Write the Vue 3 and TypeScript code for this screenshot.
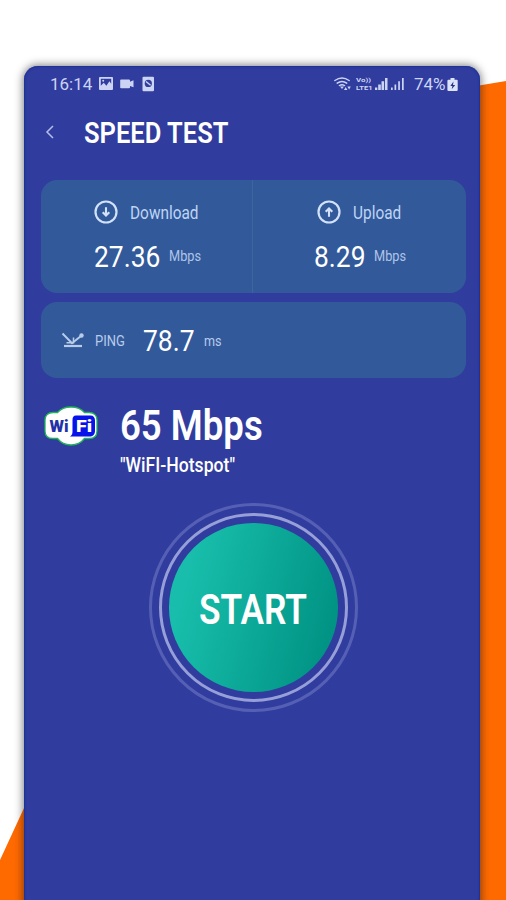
<script setup lang="ts">
interface Speed {
  id: string
  label: string
  value: string
  arrow: string
}

const speeds: Speed[] = [
  { id: 'download', label: 'Download', value: '27.36', arrow: 'M12 7.3v8M8.7 12.2l3.300 3.300 3.300-3.300' },
  { id: 'upload', label: 'Upload', value: '8.29', arrow: 'M12 16.7v-8M8.7 11.800L12 8.500l3.300 3.300' },
]
</script>

<template>
  <div class="stage">
    <svg class="backdrop" viewBox="0 0 506 900" aria-hidden="true">
      <path d="M470 87L506 81V900H470zM0 860L24 808V900H0z" fill="#ff6a00" />
    </svg>
    <main class="phone">
      <div class="status">
        <span class="clock t">16:14</span>
        <svg class="notes" viewBox="0 0 56 16" fill="#ccd4f4">
          <path fill-rule="evenodd" d="M1 1h12a1 1 0 0 1 1 1v11a1 1 0 0 1-1 1H1a1 1 0 0 1-1-1V2a1 1 0 0 1 1-1zm.8 1.8v7l3-3 2.6 3 3-4.5 1.8 2.5v-5z" />
          <circle cx="4.2" cy="4.8" r="1" />
          <path d="M22 3.500h8a1 1 0 0 1 1 1v1.300l3.500-1.500v7L31 10v1.300a1 1 0 0 1-1 1h-8a.8.8 0 0 1-.8-.8V4.300a.8.8 0 0 1 .8-.8z" />
          <path fill-rule="evenodd" d="M44.500 .7h9.500a1 1 0 0 1 1 1v12.500a1 1 0 0 1-1 1h-9.500a1 1 0 0 1-1-1V1.700a1 1 0 0 1 1-1zM49.300 3.800a3.600 3.600 0 1 0 0 7.200 3.600 3.600 0 0 0 0-7.200z" />
          <path d="M47 5.500l4.600 3.800" stroke="#ccd4f4" stroke-width="1.400" />
        </svg>
        <svg class="signals" viewBox="0 0 72 16" fill="#ccd4f4">
          <g fill="none" stroke="#ccd4f4" stroke-width="1.500" stroke-linecap="round">
            <path d="M.9 4.500Q8-.4 15.100 4.500M3.200 7.100Q8 3.800 12.700 7.100M5.500 9.500Q8 7.800 10.500 9.500" />
          </g>
          <path d="M6 10.500h4L8 13zM10 14l1.700-3 1.700 3zM13.400 10.500h3.400l-1.700 3z" />
          <text x="22" y="6.400" textLength="15" lengthAdjust="spacingAndGlyphs">Vo))</text>
          <text x="22" y="13.900" textLength="16.500" lengthAdjust="spacingAndGlyphs">LTE1</text>
          <path d="M41 11.500h2.300V14H41zM44.200 8.500h2.600V14h-2.600zM47.500 5.300h2.600V14h-2.600zM51 2h2.500v12H51z" />
          <path d="M57 11.500h1.700V14H57zM60.500 8.500h1.700V14h-1.700zM64.200 5.300h1.700V14h-1.700zM68 2h1.700v12H68z" />
        </svg>
        <span class="percent t">74%</span>
        <svg class="battery" viewBox="0 0 12 15">
          <path d="M3.500 1h4v1.700h2.200a1 1 0 0 1 1 1V13a1 1 0 0 1-1 1H1.400a1 1 0 0 1-1-1V3.700a1 1 0 0 1 1-1h2.100z" fill="#dce2fa" />
          <path d="M6.500 4.500L3.300 9h2.100l-.7 3.300L8.200 8H6z" fill="#26338b" />
        </svg>
      </div>

      <header class="bar">
        <svg class="back" viewBox="0 0 10 14"><path d="M8 1L2 7l6 6" fill="none" stroke="#b4bfeb" stroke-width="1.500" /></svg>
        <h1 class="t">SPEED TEST</h1>
      </header>

      <section class="card speeds">
        <div v-for="s in speeds" :key="s.id" class="speed" :class="s.id">
          <div class="caption">
            <svg class="dir" viewBox="0 0 24 24" fill="none" stroke="#d3e2fa">
              <circle cx="12" cy="12" r="10.500" stroke-width="2.200" />
              <path :d="s.arrow" stroke-width="2.100" />
            </svg>
            <span class="label t">{{ s.label }}</span>
          </div>
          <div class="reading">
            <span class="value t">{{ s.value }}</span>
            <span class="unit t">Mbps</span>
          </div>
        </div>
      </section>

      <section class="card ping">
        <svg class="bounce" viewBox="0 0 24 16" fill="none" stroke="#b9cbea">
          <path d="M1.500 1.500L11 11.200L20 4" stroke-width="2" />
          <path d="M5.500 10.800h7V5.500" stroke-width="1.500" />
          <path d="M3 14h18" stroke-width="2.200" />
          <circle cx="20.500" cy="3.500" r="2.200" fill="#b9cbea" stroke="none" />
        </svg>
        <span class="ping-label t">PING</span>
        <span class="ping-value t">78.7</span>
        <span class="ping-unit t">ms</span>
      </section>

      <section class="network">
        <svg class="wifi" viewBox="0 0 54 40">
          <path d="M13.500 6.500C17 2.500 21.500 1 27 1s10 1.500 13.500 5.500H45c5 0 8 3 8 7.500v11c0 5-3 7.500-8 7.500h-4.500C37 37 32.500 39 27 39s-10-2-13.500-6.500H9c-5 0-8-2.500-8-7.500V14c0-4.500 3-7.500 8-7.500z" fill="#fff" stroke="#20b35c" stroke-width="1.300" />
          <path d="M32 9.500h14.500c3 0 4.500 2 4.500 5v10c0 4-2 6-6 6H26c2.500-1.500 2.500-3.500 2.500-6V14c0-3 1-4.500 3.500-4.500z" fill="#0713e8" />
          <text class="wi" x="5.500" y="25.700" textLength="19" lengthAdjust="spacingAndGlyphs">Wi</text>
          <text class="fi" x="32" y="25.700" textLength="16" lengthAdjust="spacingAndGlyphs">Fi</text>
        </svg>
        <div class="link">
          <strong class="t">65 Mbps</strong>
          <span class="ssid t">"WiFI-Hotspot"</span>
        </div>
      </section>

      <button class="start" type="button">
        <span class="ring"><span class="disc"><span class="go t">START</span></span></span>
      </button>
    </main>
  </div>
</template>

<style>
body {
  margin: 0;
  background: #fff;
}
</style>

<style scoped>
.stage {
  position: relative;
  box-sizing: border-box;
  width: 506px;
  height: 900px;
  padding: 66px 26px 0 24px;
  overflow: hidden;
  font-family: Roboto, "Liberation Sans", sans-serif;
}
.backdrop {
  position: absolute;
  inset: 0;
  width: 506px;
  height: 900px;
}
.phone {
  position: relative;
  box-sizing: border-box;
  height: 860px;
  padding: 0 14px 0 17px;
  border-radius: 14px 14px 0 0;
  background: #303c9e;
  box-shadow: 0 0 8px 1px rgba(20, 20, 30, 0.55), inset 0 0 2px 1px #1d3297;
  color: #fff;
}
.t {
  display: block;
  flex: none;
  white-space: nowrap;
  transform: scaleX(0.88);
  transform-origin: left center;
}
.status {
  display: flex;
  align-items: center;
  height: 36px;
  padding-left: 9px;
  color: #ccd4f4;
  font-size: 17px;
}
.status .t {
  transform: none;
}
.clock {
  width: 49px;
}
.notes {
  width: 56px;
  height: 16px;
}
.signals {
  width: 72px;
  height: 16px;
  margin-left: 179px;
  font-size: 6.2px;
  font-weight: 700;
}
.percent {
  width: 33px;
  margin-left: 8px;
}
.battery {
  width: 12px;
  height: 15px;
}
.bar {
  display: flex;
  align-items: center;
  height: 60px;
  padding-left: 4px;
}
.back {
  width: 10px;
  height: 14px;
}
h1 {
  margin: 2px 0 0 29px;
  font-size: 29px;
  font-weight: 600;
  line-height: 36px;
  transform: scaleX(0.89);
}
.card {
  box-sizing: border-box;
  border-radius: 16px;
  background: #325a9a;
}
.speeds {
  display: grid;
  grid-template-columns: 212px 213px;
  height: 113px;
  margin-top: 18px;
}
.speed {
  padding-top: 20px;
}
.download {
  padding-left: 53px;
  border-right: 1px solid #3d659f;
}
.upload {
  padding-left: 64px;
}
.caption {
  display: flex;
  align-items: center;
  height: 24px;
}
.dir {
  width: 24px;
  height: 24px;
}
.label {
  margin: 1px 0 0 12px;
  color: #bfd4f4;
  font-size: 17.5px;
}
.reading {
  display: flex;
  align-items: center;
  height: 40px;
  margin-top: 12px;
}
.value {
  width: 75px;
  font-size: 30px;
}
.upload .reading {
  margin-left: -3px;
}
.upload .value {
  width: 60px;
}
.unit {
  color: #afc5e8;
  font-size: 15px;
  transform: scaleX(0.85);
}
.ping {
  display: flex;
  align-items: center;
  height: 76px;
  margin-top: 9px;
  padding-left: 20px;
}
.bounce {
  width: 24px;
  height: 16px;
}
.ping-label {
  width: 48px;
  margin: 1px 0 0 10px;
  color: #b9cbea;
  font-size: 15.5px;
  transform: scaleX(0.84);
}
.ping-value {
  width: 61px;
  margin-top: 1px;
  font-size: 30px;
}
.ping-unit {
  margin-top: 2px;
  color: #b9cbea;
  font-size: 15px;
  transform: scaleX(0.84);
}
.network {
  display: flex;
  height: 85px;
  margin-top: 24px;
  padding-left: 3px;
}
.wifi {
  width: 54px;
  height: 40px;
  margin-top: 4px;
}
.wi,
.fi {
  font-size: 17px;
  font-weight: 900;
}
.wi {
  fill: #2430a8;
}
.fi {
  fill: #fff;
}
.link {
  margin-left: 22px;
}
.link strong {
  height: 50px;
  font-size: 42px;
  font-weight: 600;
  line-height: 47px;
  transform: scaleX(0.87);
}
.ssid {
  font-size: 20px;
  font-weight: 500;
  line-height: 27px;
}
.start {
  display: block;
  box-sizing: border-box;
  width: 209px;
  height: 209px;
  margin: 16px 0 0 108px;
  padding: 7px;
  border: 3px solid #5560b5;
  border-radius: 50%;
  background: none;
  color: #fff;
  font-family: inherit;
}
.ring {
  display: block;
  box-sizing: border-box;
  width: 189px;
  height: 189px;
  padding: 7px;
  border: 3px solid #979fd9;
  border-radius: 50%;
}
.disc {
  display: flex;
  align-items: center;
  width: 169px;
  height: 169px;
  border-radius: 50%;
  background: linear-gradient(105deg, #18beab 15%, #019485 88%);
}
.go {
  margin: 3px 0 0 30px;
  font-size: 42px;
  font-weight: 600;
  transform: scaleX(0.84);
}
</style>
